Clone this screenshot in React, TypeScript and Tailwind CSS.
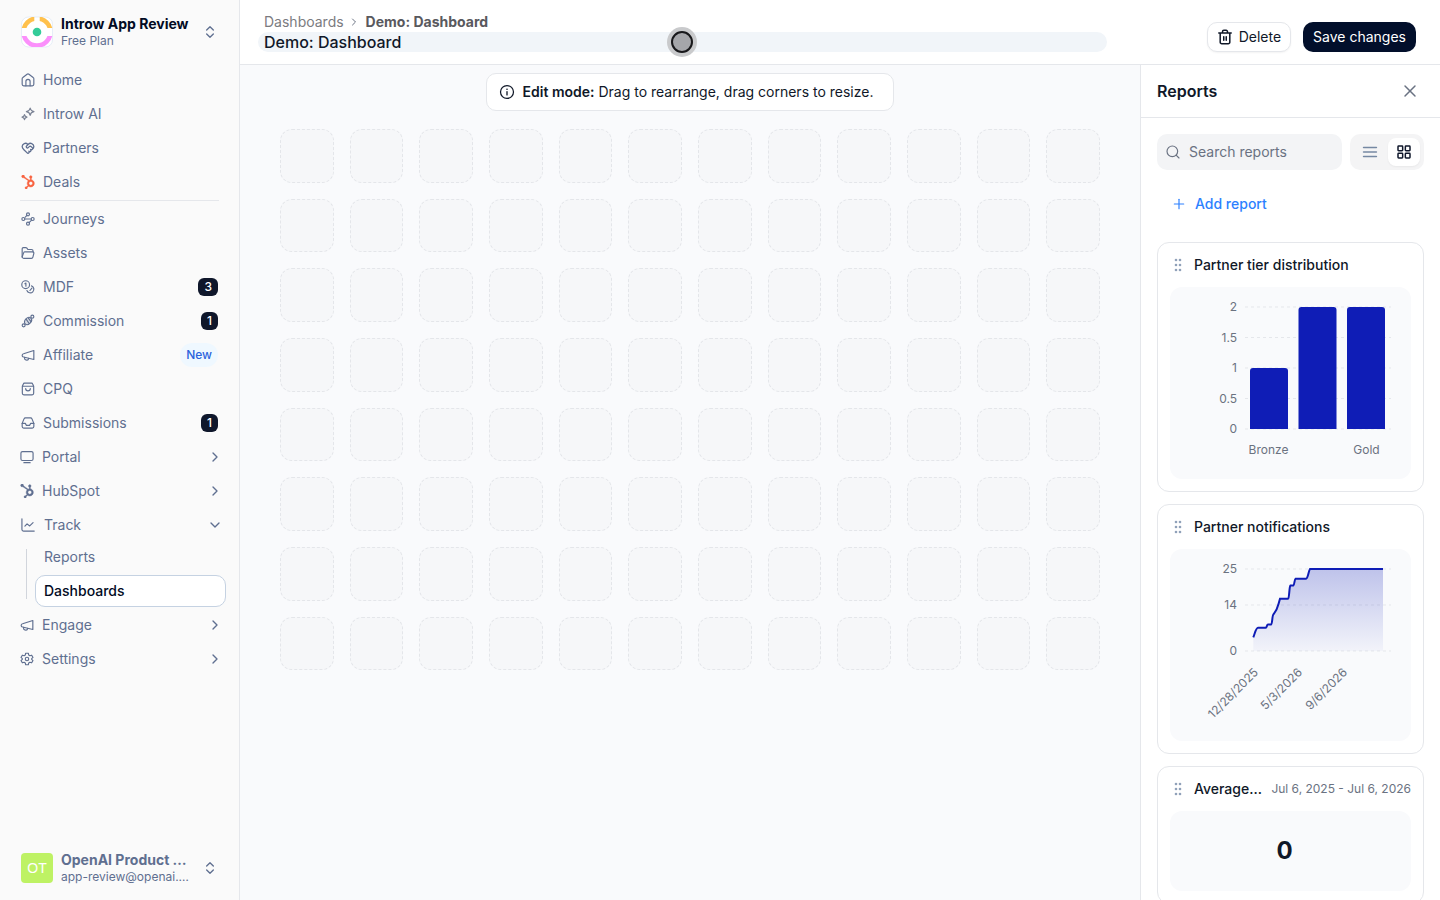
import React, { useState } from "react";
import { FaHubspot } from "react-icons/fa";
import {
  ChevronDown,
  ChevronRight,
  ChevronsUpDown,
  HeartHandshake,
  LayoutGrid,
  Plus,
  Search,
  X,
} from "lucide-react";

type IconProps = { children: React.ReactNode; className?: string };

function Glyph({ children, className = "size-3.5" }: IconProps) {
  return (
    <svg
      viewBox="0 0 18 18"
      fill="none"
      stroke="currentColor"
      strokeWidth="1.5"
      strokeLinecap="round"
      strokeLinejoin="round"
      aria-hidden="true"
      className={`shrink-0 ${className}`}
    >
      {children}
    </svg>
  );
}

const HomeIcon = () => (
  <Glyph>
    <path d="M1.500 7.400c0-.7.300-1.300.900-1.700l5.400-4.100a2 2 0 0 1 2.400 0l5.400 4.100c.6.400.9 1 .9 1.700v7.100a2 2 0 0 1-2 2h-11a2 2 0 0 1-2-2z" />
    <path d="M6.300 16.500v-5.500a2.700 2.700 0 0 1 5.400 0v5.500" />
  </Glyph>
);
const SparklesIcon = () => (
  <Glyph className="size-3.5 text-[#7c8496]">
    <path d="M11.800 1.300c.5 3 1.700 4.200 4.900 4.700-3.200.5-4.400 1.700-4.900 4.700-.5-3-1.700-4.200-4.900-4.700 3.200-.5 4.400-1.700 4.900-4.700z" />
    <path d="M4.500 9.800c.3 2 1.100 2.800 3.200 3.200-2.100.4-2.900 1.200-3.200 3.200-.3-2-1.100-2.800-3.200-3.200 2.100-.4 2.900-1.200 3.200-3.200z" />
  </Glyph>
);
const JourneyIcon = () => (
  <Glyph>
    <circle cx="9" cy="3" r="1.900" />
    <circle cx="15" cy="9" r="1.900" />
    <circle cx="3" cy="9" r="1.900" />
    <circle cx="9" cy="15" r="1.900" />
    <path d="M5 9h8M7.600 4.400 5.500 6.500M10.400 13.600l2.900-2.900" />
  </Glyph>
);
const FolderIcon = () => (
  <Glyph>
    <path d="M1.500 14V3.500a1.500 1.500 0 0 1 1.500-1.500h3.200c.6 0 1 .3 1.400.8L8.800 4.500h4.700a2 2 0 0 1 2 2v1" />
    <path d="M5.700 7.500h9.300a1.500 1.500 0 0 1 1.500 1.900l-1.200 5a2 2 0 0 1-1.900 1.500H3.500a2 2 0 0 1-1.900-2.500l1.800-4.600a2 2 0 0 1 2.300-1.300z" />
  </Glyph>
);
const CoinsIcon = () => (
  <Glyph>
    <circle cx="6" cy="6" r="5" />
    <path d="M5 4.700 6.300 4v4" />
    <path d="M13.500 7.600a4.600 4.600 0 1 1-5.900 5.900M14 10.500l-2.500 3" />
  </Glyph>
);
const CandyIcon = () => (
  <Glyph>
    <ellipse cx="9" cy="9" rx="5.200" ry="3.800" transform="rotate(-45 9 9)" fill="currentColor" fillOpacity=".2" />
    <path d="M7 7.200l3.500 5M9.500 5.300l3.300 4.500" />
    <circle cx="14.600" cy="3.400" r="1.900" />
    <circle cx="3.400" cy="14.600" r="1.900" />
  </Glyph>
);
const MegaphoneIcon = () => (
  <Glyph>
    <path d="M16.500 3.200v11.600L3.300 11.600A2.100 2.100 0 0 1 1.500 9.500a2.100 2.100 0 0 1 1.800-2.100z" />
    <path d="M4.600 12v1.300a2 2 0 0 0 1.600 2l1.300.2a2 2 0 0 0 2.200-1.600v-.5" />
  </Glyph>
);
const BagIcon = () => (
  <Glyph>
    <path d="M1.700 5.500h14.600M3 2.500l-1.300 3v9a2 2 0 0 0 2 2h10.600a2 2 0 0 0 2-2v-9l-1.300-3a1.500 1.500 0 0 0-1.300-1H4.300a1.500 1.500 0 0 0-1.300 1z" />
    <path d="M6 8.500a3 3 0 0 0 6 0" />
  </Glyph>
);
const InboxIcon = () => (
  <Glyph>
    <path d="M1.500 9.500h4l1.500 2.500h4l1.500-2.500h4" />
    <path d="M3.900 3.700 1.500 9.500v4a2 2 0 0 0 2 2h11a2 2 0 0 0 2-2v-4l-2.400-5.800a2 2 0 0 0-1.900-1.200H5.800a2 2 0 0 0-1.900 1.200z" />
  </Glyph>
);
const MonitorIcon = () => (
  <Glyph>
    <rect x="1.200" y="2" width="15.600" height="11.500" rx="2" />
    <path d="M5 16.300h8" />
  </Glyph>
);
const TrackIcon = () => (
  <Glyph>
    <path d="M1.200 1v13.800a2 2 0 0 0 2 2H17" />
    <path d="M5 10.500l2.800-3 3.400 2.700L15.500 6" />
  </Glyph>
);
const GearIcon = () => (
  <Glyph>
    <circle cx="9" cy="9" r="2.200" />
    <path d="M7.300 1.600h3.400l.5 2.300 1.500.9 2.300-.7 1.700 2.900-1.700 1.600v.8l1.700 1.600-1.700 2.900-2.300-.7-1.500.9-.5 2.300H7.300l-.5-2.300-1.500-.9-2.300.7-1.700-2.900L3 9.400v-.8L1.300 7 3 4.100l2.300.7 1.500-.9z" />
  </Glyph>
);
const TrashIcon = () => (
  <Glyph className="size-4">
    <path
      d="M2 4.500h14M6.200 4.300V3a1.500 1.500 0 0 1 1.500-1.500h2.600A1.500 1.500 0 0 1 11.800 3v1.300M3.600 4.500v10.300a1.800 1.800 0 0 0 1.800 1.800h7.200a1.800 1.800 0 0 0 1.800-1.800V4.500M7.600 8.700v4M10.400 8.700v4"
      strokeWidth="1.700"
    />
  </Glyph>
);
const InfoIcon = () => (
  <Glyph className="size-4">
    <circle cx="9" cy="9" r="7.300" strokeWidth="1.400" />
    <path d="M9 8.700v3.600" />
    <circle cx="9" cy="5.900" r=".9" fill="currentColor" stroke="none" />
  </Glyph>
);
const ListIcon = () => (
  <Glyph className="size-4">
    <path d="M1.800 4h14.400M1.800 9h14.400M1.800 14h14.400" strokeWidth="1.800" />
  </Glyph>
);
const HubSpotIcon = ({ className = "" }: { className?: string }) => (
  <FaHubspot className={`size-3.5 shrink-0 ${className}`} stroke="currentColor" strokeWidth="18" />
);
const GripIcon = () => (
  <svg viewBox="0 0 8 14" className="h-3.5 w-2 shrink-0 text-slate-400" fill="currentColor" aria-hidden="true">
    {[2, 7, 12].map((y) => (
      <g key={y}>
        <circle cx="2" cy={y} r="1.300" />
        <circle cx="6" cy={y} r="1.300" />
      </g>
    ))}
  </svg>
);
const WorkspaceLogo = () => (
  <svg viewBox="0 0 32 32" className="size-8 shrink-0" aria-hidden="true">
    <defs>
      <clipPath id="logo-top">
        <path d="M0 1h13.300v11H0zM18.700 1H32v11H18.700z" />
      </clipPath>
      <clipPath id="logo-bottom">
        <path d="M0 20h32v11H0z" />
      </clipPath>
    </defs>
    <rect y="1" x=".5" width="31" height="30" rx="7" fill="#fff" stroke="#dbe7f3" strokeWidth=".7" />
    <circle cx="16" cy="16" r="13.500" fill="none" stroke="#ffc14d" strokeWidth="4.600" clipPath="url(#logo-top)" />
    <circle cx="16" cy="16" r="13.500" fill="none" stroke="#fb90fb" strokeWidth="4.600" clipPath="url(#logo-bottom)" />
    <circle cx="16" cy="16" r="4.300" fill="#34cc99" />
  </svg>
);

type NavItem = { label: string; icon: React.ReactNode; badge?: string; tag?: string };

const primary: NavItem[] = [
  { label: "Home", icon: <HomeIcon /> },
  { label: "Introw AI", icon: <SparklesIcon /> },
  { label: "Partners", icon: <HeartHandshake className="size-3.5 shrink-0" strokeWidth={2.25} /> },
  { label: "Deals", icon: <HubSpotIcon className="text-[#f8623f]" /> },
];
const secondary: NavItem[] = [
  { label: "Journeys", icon: <JourneyIcon /> },
  { label: "Assets", icon: <FolderIcon /> },
  { label: "MDF", icon: <CoinsIcon />, badge: "3" },
  { label: "Commission", icon: <CandyIcon />, badge: "1" },
  { label: "Affiliate", icon: <MegaphoneIcon />, tag: "New" },
  { label: "CPQ", icon: <BagIcon /> },
  { label: "Submissions", icon: <InboxIcon />, badge: "1" },
];

function NavLink({ item }: { item: NavItem }) {
  return (
    <a href="#" className="flex h-8 items-center gap-2 pr-[21px] pl-[21px]">
      {item.icon}
      <span className="flex-1">{item.label}</span>
      {item.badge && (
        <span className="flex h-[18px] items-center rounded-md bg-slate-900 px-1.5 text-xs font-medium text-white">
          {item.badge}
        </span>
      )}
      {item.tag && (
        <span className="flex h-6 items-center rounded-full bg-[#eff8ff] px-1.5 text-xs font-medium text-[#2b63dc]">
          {item.tag}
        </span>
      )}
    </a>
  );
}

function NavGroup({ label, icon, open = false }: { label: string; icon: React.ReactNode; open?: boolean }) {
  const Chevron = open ? ChevronDown : ChevronRight;
  return (
    <button type="button" aria-expanded={open} className="flex h-8 items-center gap-2 pr-4 pl-5 text-left">
      {icon}
      <span className="flex-1">{label}</span>
      <Chevron className="size-4 shrink-0" />
    </button>
  );
}

function Sidebar() {
  return (
    <aside className="flex w-60 shrink-0 flex-col border-r border-gray-200 bg-[#fafafa] text-sm text-[#5f6f90]">
      <button type="button" className="flex h-16 items-center gap-2 pr-[21px] pl-[21px] text-left">
        <WorkspaceLogo />
        <span className="flex min-w-0 flex-1 flex-col">
          <span className="truncate text-sm leading-[18px] font-bold text-[#020b24]">Introw App Review</span>
          <span className="text-xs leading-4">Free Plan</span>
        </span>
        <ChevronsUpDown className="size-4 shrink-0" />
      </button>

      <nav className="flex flex-1 flex-col gap-0.5">
        {primary.map((item) => (
          <NavLink key={item.label} item={item} />
        ))}
        <hr className="mx-5 border-gray-200" />
        {secondary.map((item) => (
          <NavLink key={item.label} item={item} />
        ))}
        <NavGroup label="Portal" icon={<MonitorIcon />} />
        <NavGroup label="HubSpot" icon={<HubSpotIcon />} />
        <div className="flex flex-col">
          <NavGroup label="Track" icon={<span className="flex w-4 justify-center"><TrackIcon /></span>} open />
          <div className="flex pr-[13px] pl-[26px]">
            <div className="my-2 mr-2 w-px bg-gray-300" />
            <div className="flex flex-1 flex-col gap-0.5">
              <a href="#" className="flex h-8 items-center px-[9px]">Reports</a>
              <a
                href="#"
                aria-current="page"
                className="flex h-8 items-center rounded-[10px] border border-[#c5d2e2] bg-white px-2 font-medium text-[#020b24]"
              >
                Dashboards
              </a>
            </div>
          </div>
        </div>
        <NavGroup label="Engage" icon={<MegaphoneIcon />} />
        <NavGroup label="Settings" icon={<GearIcon />} />
      </nav>

      <button type="button" className="flex h-16 items-center gap-2 pr-[21px] pl-[21px] text-left">
        <span className="flex h-[30px] w-8 shrink-0 items-center justify-center rounded-sm bg-[#bef264] font-['Liberation_Sans',sans-serif] text-sm text-white">
          OT
        </span>
        <span className="flex min-w-0 flex-1 flex-col">
          <span className="truncate text-sm leading-[18px] font-bold">OpenAI Product Review</span>
          <span className="truncate text-xs leading-4">app-review@openai.com</span>
        </span>
        <ChevronsUpDown className="size-4 shrink-0" />
      </button>
    </aside>
  );
}

function Header() {
  const [title, setTitle] = useState("Demo: Dashboard");
  return (
    <header className="flex shrink-0 border-b border-gray-200 bg-white pr-6 pl-[18px]">
      <div className="flex h-16 flex-1 flex-col pt-3">
        <nav aria-label="Breadcrumb" className="flex h-5 items-center gap-1 pl-1.5 text-sm text-gray-500">
          <a href="#" className="text-[#7b7b80]">Dashboards</a>
          <ChevronRight className="size-3" />
          <span className="pl-0.5 font-bold text-[#59595e]">Demo: Dashboard</span>
        </nav>
        <div className="relative mr-[100px] flex">
          <input
            aria-label="Dashboard name"
            value={title}
            onChange={(e) => setTitle(e.target.value)}
            className="h-5 w-full rounded-full bg-slate-100 px-1.5 text-base font-medium text-gray-900 outline-none"
          />
          <span className="absolute top-1/2 left-1/2 flex size-[30px] -translate-x-1/2 -translate-y-1/2 items-center justify-center rounded-full bg-[#c9cacc]">
            <span className="size-[22px] rounded-full border-2 border-[#18181b] bg-[#a5a6aa]" />
          </span>
        </div>
      </div>
      <div className="flex items-start gap-3 pt-[22px] text-sm">
        <button type="button" className="flex h-[30px] items-center gap-1.5 rounded-[10px] border border-gray-200 bg-white px-[9px] text-gray-900 shadow-xs">
          <TrashIcon />
          Delete
        </button>
        <button type="button" className="flex h-[30px] items-center rounded-[10px] bg-[#020f2b] px-2.5 text-white">
          Save changes
        </button>
      </div>
    </header>
  );
}

function Canvas() {
  return (
    <main className="flex min-w-0 flex-1 flex-col bg-[#f9fafc] px-10 pt-2">
      <div className="mb-[18px] flex h-[38px] items-center gap-2 self-center rounded-[10px] border border-gray-200 bg-white pr-5 pl-3 text-sm text-gray-900">
        <InfoIcon />
        <p>
          <strong className="font-semibold">Edit mode:</strong> Drag to rearrange, drag corners to resize.
        </p>
      </div>
      <div className="grid grid-cols-12 gap-4">
        {Array.from({ length: 96 }, (_, i) => (
          <div key={i} className="aspect-square rounded-xl border border-dashed border-[#e4e6ea] bg-[#f6f7f9]" />
        ))}
      </div>
    </main>
  );
}

const gridLine = { stroke: "#e5e7eb", strokeDasharray: "3 3" };

function BarChart() {
  const ticks: [string, number][] = [["2", 20], ["1.5", 50.5], ["1", 81], ["0.5", 111.5], ["0", 142]];
  const bars = [{ x: 80, top: 81 }, { x: 128.5, top: 20 }, { x: 177, top: 20 }];
  return (
    <svg viewBox="0 0 241 192" className="w-full text-xs" fill="#6b7280" role="img" aria-label="Partner tier distribution">
      {ticks.map(([label, y]) => (
        <g key={label}>
          <line x1="75" x2="221" y1={y} y2={y} {...gridLine} />
          <text x="67" y={y + 4} textAnchor="end">{label}</text>
        </g>
      ))}
      {bars.map(({ x, top }) => (
        <path key={x} d={`M${x} 142V${top + 3}a3 3 0 0 1 3-3h32a3 3 0 0 1 3 3V142z`} fill="#0f1db6" />
      ))}
      <text x="98.500" y="167" textAnchor="middle">Bronze</text>
      <text x="196.500" y="167" textAnchor="middle">Gold</text>
    </svg>
  );
}

function AreaChart() {
  const line =
    "M83.300 88.300C85 84 86 78.700 88 78.700H95.700C97 78.700 96.700 75.500 98 75.500H101C102.500 75 102 66.500 103.500 65.300C106 62.500 107.500 59 108.500 55L110 49.700H118C119.500 49 119 38 120.500 36.500H123.300C124.500 36 124.500 30 125.500 29.700H136C138 29.500 138.500 22 140 20H213";
  return (
    <svg viewBox="0 0 241 192" className="w-full text-xs" fill="#6b7280" role="img" aria-label="Partner notifications">
      <defs>
        <linearGradient id="area-fill" x1="0" y1="0" x2="0" y2="1">
          <stop offset="0" stopColor="#0f1db6" stopOpacity=".25" />
          <stop offset="1" stopColor="#0f1db6" stopOpacity=".03" />
        </linearGradient>
      </defs>
      {([["25", 20], ["14", 56], ["0", 102]] as [string, number][]).map(([label, y]) => (
        <g key={label}>
          <line x1="75" x2="221" y1={y} y2={y} {...gridLine} />
          <text x="67" y={y + 4} textAnchor="end">{label}</text>
        </g>
      ))}
      <path d={`${line}V102H83.300z`} fill="url(#area-fill)" />
      <path d={line} fill="none" stroke="#0f1db6" strokeWidth="2" />
      {([["12/28/2025", 89], ["5/3/2026", 133], ["9/6/2026", 178]] as [string, number][]).map(([label, x]) => (
        <text key={label} transform={`translate(${x} 124) rotate(-45)`} textAnchor="end">{label}</text>
      ))}
    </svg>
  );
}

function ReportCard({ title, range, children }: { title: string; range?: string; children: React.ReactNode }) {
  return (
    <article className="shrink-0 rounded-xl border border-gray-200 bg-white p-3">
      <header className="mb-3 flex h-5 items-center gap-2 pl-1">
        <GripIcon />
        <h3 className="ml-1 min-w-0 flex-1 truncate text-sm font-medium text-gray-900">{title}</h3>
        {range && <span className="text-xs text-gray-500">{range}</span>}
      </header>
      <div className="rounded-xl bg-[#f9fafc]">{children}</div>
    </article>
  );
}

function ReportsPanel() {
  return (
    <aside className="flex w-[300px] shrink-0 flex-col border-l border-gray-200 bg-white">
      <div className="flex h-[53px] shrink-0 items-center justify-between border-b border-gray-200 pr-5 pl-4">
        <h2 className="text-base font-semibold text-gray-900">Reports</h2>
        <button type="button" aria-label="Close" className="text-gray-500">
          <X className="size-5" strokeWidth={1.75} />
        </button>
      </div>
      <div className="flex min-h-0 flex-1 flex-col overflow-hidden p-4">
        <div className="flex shrink-0 gap-2">
          <label className="flex h-9 min-w-0 flex-1 items-center gap-2 rounded-[10px] bg-gray-100 px-2 text-gray-500">
            <Search className="size-4 shrink-0" strokeWidth={1.75} />
            <input
              type="search"
              aria-label="Search reports"
              placeholder="Search reports"
              className="w-full min-w-0 bg-transparent text-sm outline-none placeholder:text-gray-500"
            />
          </label>
          <div className="flex rounded-[10px] bg-[#f4f4f5] p-1">
            <button type="button" aria-label="List view" className="flex h-7 w-8 items-center justify-center rounded-lg text-[#7588a3]">
              <ListIcon />
            </button>
            <button type="button" aria-label="Grid view" aria-pressed="true" className="ml-0.5 flex h-7 w-8 items-center justify-center rounded-lg bg-white text-slate-900 shadow-xs">
              <LayoutGrid className="size-4" strokeWidth={2.25} />
            </button>
          </div>
        </div>
        <button type="button" className="mt-4 mb-5 flex h-9 shrink-0 items-center gap-2 self-start px-3.5 text-sm font-medium text-blue-500">
          <Plus className="size-4" strokeWidth={1.75} />
          Add report
        </button>
        <div className="flex flex-col gap-3">
          <ReportCard title="Partner tier distribution"><BarChart /></ReportCard>
          <ReportCard title="Partner notifications"><AreaChart /></ReportCard>
          <ReportCard title="Average deal size" range="Jul 6, 2025 - Jul 6, 2026">
            <p className="flex h-20 items-center justify-center pr-3 text-2xl font-bold text-gray-900">0</p>
          </ReportCard>
        </div>
      </div>
    </aside>
  );
}

export default function App() {
  return (
    <div className="flex h-screen overflow-hidden font-['Inter',sans-serif]">
      <Sidebar />
      <div className="flex min-w-0 flex-1 flex-col">
        <Header />
        <div className="flex min-h-0 flex-1">
          <Canvas />
          <ReportsPanel />
        </div>
      </div>
    </div>
  );
}
